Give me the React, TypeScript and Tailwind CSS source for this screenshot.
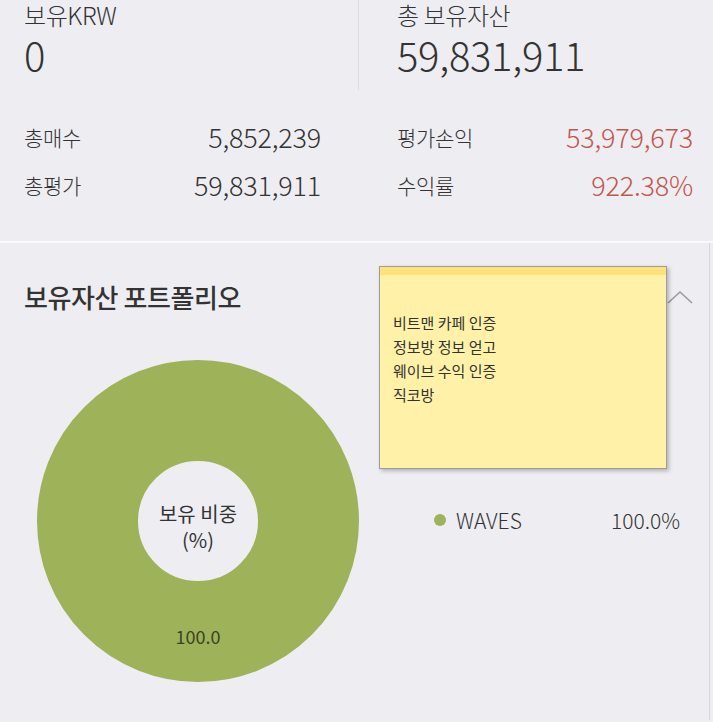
import React from "react";

const Row = ({ label, value, red }: { label: string; value: string; red?: boolean }) => (
  <div className="flex h-[48px] items-center justify-between">
    <span className="text-[21px] font-light leading-[28px] tracking-[-0.3px] text-[#333]">{label}</span>
    <span className={`text-[27px] font-light leading-[32px] tracking-[-0.2px] ${red ? "text-[#c2574f]" : "text-[#333]"}`}>{value}</span>
  </div>
);

export default function App() {
  return (
    <div className="relative h-[722px] w-[713px] overflow-hidden bg-[#eeeef2] font-['Noto_Sans_CJK_KR','Noto_Sans',sans-serif] text-[#333]">
      {/* top summary */}
      <div className="grid grid-cols-[359px_1fr] pb-[32px]">
        <div>
          <div className="h-[90px] border-r border-[#dcdce1] pl-6">
            <div className="text-[24px] font-light leading-[30px] tracking-[-0.4px]">보유KRW</div>
            <div className="text-[40px] font-light leading-[48px] tracking-[-0.3px]">0</div>
          </div>
          <div className="pl-6 pr-[38px] pt-[23px]">
            <Row label="총매수" value="5,852,239" />
            <Row label="총평가" value="59,831,911" />
          </div>
        </div>
        <div>
          <div className="h-[90px] pl-[38px]">
            <div className="text-[24px] font-light leading-[30px] tracking-[-0.4px]">총 보유자산</div>
            <div className="text-[40px] font-light leading-[48px] tracking-[-0.3px]">59,831,911</div>
          </div>
          <div className="pl-[38px] pr-5 pt-[23px]">
            <Row label="평가손익" value="53,979,673" red />
            <Row label="수익률" value="922.38%" red />
          </div>
        </div>
      </div>

      <div className="h-[2px] bg-[#fafafc]" />

      {/* portfolio */}
      <div className="h-[477px] w-[710px] border-r border-[#dadade] pl-6 pt-[36px]">
        <div className="flex h-[36px] items-center justify-between pr-[15px]">
          <span className="text-[26px] font-medium leading-[36px] tracking-[-0.4px] text-[#333]">보유자산 포트폴리오</span>
          <svg width="28" height="16" viewBox="0 0 28 16" fill="none">
            <path d="M2 14 L14 3 L26 14" stroke="#9a9a9e" strokeWidth="1.6" />
          </svg>
        </div>
        <div className="mt-[45px] flex items-center">
          <svg className="ml-[13px] shrink-0" width="322" height="322" viewBox="0 0 322 322">
            <circle cx="161" cy="161" r="110.5" fill="none" stroke="#9db259" strokeWidth="101" />
            <text x="161" y="162" textAnchor="middle" fontSize="20" fill="#333">보유 비중</text>
            <text x="161" y="188" textAnchor="middle" fontSize="20" fill="#333">(%)</text>
            <text x="161" y="284" textAnchor="middle" fontSize="18" fill="#3a4620">100.0</text>
          </svg>
          <div className="ml-[75px] mb-[3px] flex flex-1 items-center pr-[29px]">
            <span className="h-3 w-3 rounded-full bg-[#9db259]" />
            <span className="ml-[10px] text-[21px] font-light leading-[26px] text-[#333]">WAVES</span>
            <span className="ml-auto text-[21px] font-light leading-[26px] text-[#333]">100.0%</span>
          </div>
        </div>
      </div>

      {/* sticky note overlay */}
      <div className="absolute left-[379px] top-[266px] h-[203px] w-[288px] border border-[#9c9c9c] bg-[#fff2a8] shadow-[2px_2px_4px_rgba(0,0,0,0.25)]">
        <div className="h-[8px] bg-[#ffe37a]" />
        <div className="pl-[13px] pt-[36px] text-[15px] leading-[24px] text-[#333]">
          <div>비트맨 카페 인증</div>
          <div>정보방 정보 얻고</div>
          <div>웨이브 수익 인증</div>
          <div>직코방</div>
        </div>
      </div>
    </div>
  );
}
